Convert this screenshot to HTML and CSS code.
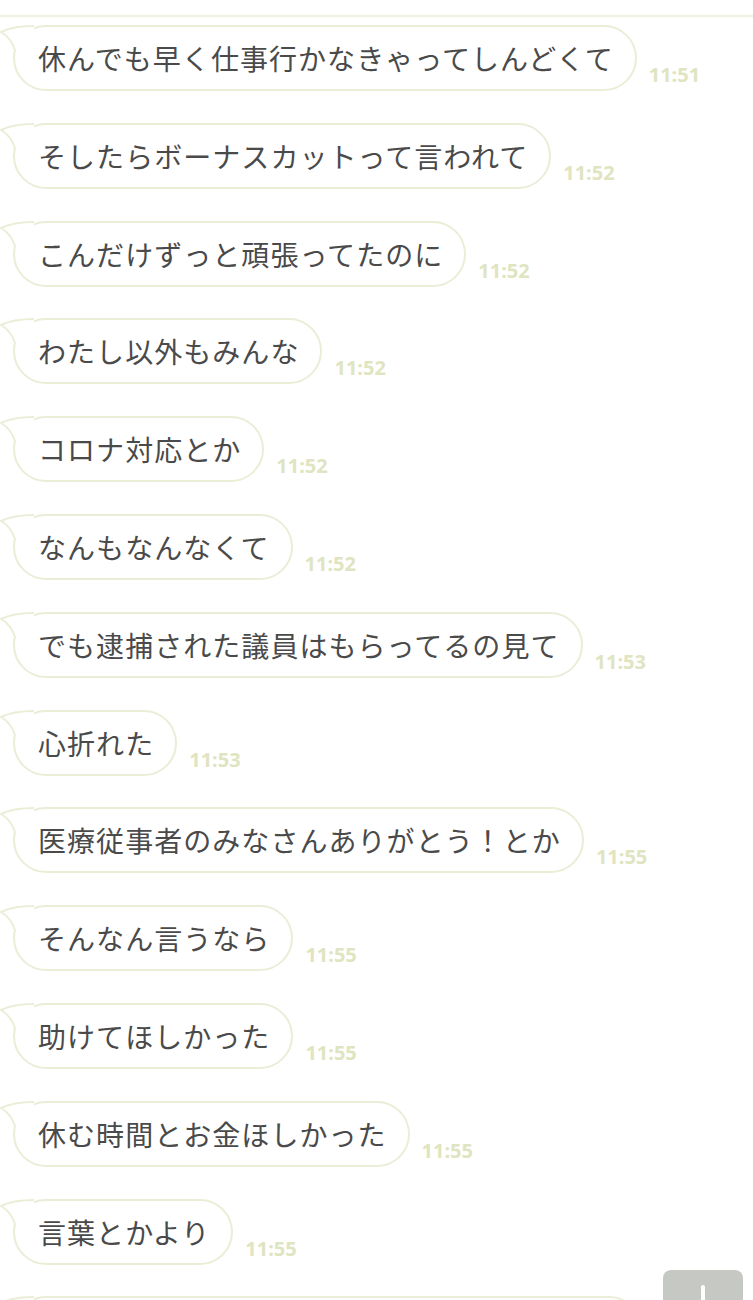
FILE: index.html
```html
<!DOCTYPE html>
<html lang="ja">
<head>
<meta charset="utf-8">
<link rel="stylesheet" href="styles.css">
</head>
<body>
<div class="chat">
  <div class="row"><div class="bubble"><svg class="tail" width="34" height="30" viewBox="0 0 34 30"><path d="M34 3 C22 3 9 5 1 9 C8 13 12 18 15 27 L34 27 Z" fill="#fff"/><path d="M34 3 C22 3 9 5 1 9 C8 13 12 18 15 27" fill="none" stroke="#ebedd7" stroke-width="2"/></svg>休んでも早く仕事行かなきゃってしんどくて</div><span class="time">11:51</span></div>
  <div class="row"><div class="bubble"><svg class="tail" width="34" height="30" viewBox="0 0 34 30"><path d="M34 3 C22 3 9 5 1 9 C8 13 12 18 15 27 L34 27 Z" fill="#fff"/><path d="M34 3 C22 3 9 5 1 9 C8 13 12 18 15 27" fill="none" stroke="#ebedd7" stroke-width="2"/></svg>そしたらボーナスカットって言われて</div><span class="time">11:52</span></div>
  <div class="row"><div class="bubble"><svg class="tail" width="34" height="30" viewBox="0 0 34 30"><path d="M34 3 C22 3 9 5 1 9 C8 13 12 18 15 27 L34 27 Z" fill="#fff"/><path d="M34 3 C22 3 9 5 1 9 C8 13 12 18 15 27" fill="none" stroke="#ebedd7" stroke-width="2"/></svg>こんだけずっと頑張ってたのに</div><span class="time">11:52</span></div>
  <div class="row"><div class="bubble"><svg class="tail" width="34" height="30" viewBox="0 0 34 30"><path d="M34 3 C22 3 9 5 1 9 C8 13 12 18 15 27 L34 27 Z" fill="#fff"/><path d="M34 3 C22 3 9 5 1 9 C8 13 12 18 15 27" fill="none" stroke="#ebedd7" stroke-width="2"/></svg>わたし以外もみんな</div><span class="time">11:52</span></div>
  <div class="row"><div class="bubble"><svg class="tail" width="34" height="30" viewBox="0 0 34 30"><path d="M34 3 C22 3 9 5 1 9 C8 13 12 18 15 27 L34 27 Z" fill="#fff"/><path d="M34 3 C22 3 9 5 1 9 C8 13 12 18 15 27" fill="none" stroke="#ebedd7" stroke-width="2"/></svg>コロナ対応とか</div><span class="time">11:52</span></div>
  <div class="row"><div class="bubble"><svg class="tail" width="34" height="30" viewBox="0 0 34 30"><path d="M34 3 C22 3 9 5 1 9 C8 13 12 18 15 27 L34 27 Z" fill="#fff"/><path d="M34 3 C22 3 9 5 1 9 C8 13 12 18 15 27" fill="none" stroke="#ebedd7" stroke-width="2"/></svg>なんもなんなくて</div><span class="time">11:52</span></div>
  <div class="row"><div class="bubble"><svg class="tail" width="34" height="30" viewBox="0 0 34 30"><path d="M34 3 C22 3 9 5 1 9 C8 13 12 18 15 27 L34 27 Z" fill="#fff"/><path d="M34 3 C22 3 9 5 1 9 C8 13 12 18 15 27" fill="none" stroke="#ebedd7" stroke-width="2"/></svg>でも逮捕された議員はもらってるの見て</div><span class="time">11:53</span></div>
  <div class="row"><div class="bubble"><svg class="tail" width="34" height="30" viewBox="0 0 34 30"><path d="M34 3 C22 3 9 5 1 9 C8 13 12 18 15 27 L34 27 Z" fill="#fff"/><path d="M34 3 C22 3 9 5 1 9 C8 13 12 18 15 27" fill="none" stroke="#ebedd7" stroke-width="2"/></svg>心折れた</div><span class="time">11:53</span></div>
  <div class="row"><div class="bubble"><svg class="tail" width="34" height="30" viewBox="0 0 34 30"><path d="M34 3 C22 3 9 5 1 9 C8 13 12 18 15 27 L34 27 Z" fill="#fff"/><path d="M34 3 C22 3 9 5 1 9 C8 13 12 18 15 27" fill="none" stroke="#ebedd7" stroke-width="2"/></svg>医療従事者のみなさんありがとう！とか</div><span class="time">11:55</span></div>
  <div class="row"><div class="bubble"><svg class="tail" width="34" height="30" viewBox="0 0 34 30"><path d="M34 3 C22 3 9 5 1 9 C8 13 12 18 15 27 L34 27 Z" fill="#fff"/><path d="M34 3 C22 3 9 5 1 9 C8 13 12 18 15 27" fill="none" stroke="#ebedd7" stroke-width="2"/></svg>そんなん言うなら</div><span class="time">11:55</span></div>
  <div class="row"><div class="bubble"><svg class="tail" width="34" height="30" viewBox="0 0 34 30"><path d="M34 3 C22 3 9 5 1 9 C8 13 12 18 15 27 L34 27 Z" fill="#fff"/><path d="M34 3 C22 3 9 5 1 9 C8 13 12 18 15 27" fill="none" stroke="#ebedd7" stroke-width="2"/></svg>助けてほしかった</div><span class="time">11:55</span></div>
  <div class="row"><div class="bubble"><svg class="tail" width="34" height="30" viewBox="0 0 34 30"><path d="M34 3 C22 3 9 5 1 9 C8 13 12 18 15 27 L34 27 Z" fill="#fff"/><path d="M34 3 C22 3 9 5 1 9 C8 13 12 18 15 27" fill="none" stroke="#ebedd7" stroke-width="2"/></svg>休む時間とお金ほしかった</div><span class="time">11:55</span></div>
  <div class="row"><div class="bubble"><svg class="tail" width="34" height="30" viewBox="0 0 34 30"><path d="M34 3 C22 3 9 5 1 9 C8 13 12 18 15 27 L34 27 Z" fill="#fff"/><path d="M34 3 C22 3 9 5 1 9 C8 13 12 18 15 27" fill="none" stroke="#ebedd7" stroke-width="2"/></svg>言葉とかより</div><span class="time">11:55</span></div>
  <div class="row"><div class="bubble"><svg class="tail" width="34" height="30" viewBox="0 0 34 30"><path d="M34 3 C22 3 9 5 1 9 C8 13 12 18 15 27 L34 27 Z" fill="#fff"/><path d="M34 3 C22 3 9 5 1 9 C8 13 12 18 15 27" fill="none" stroke="#ebedd7" stroke-width="2"/></svg>&#12288;&#12288;&#12288;&#12288;&#12288;&#12288;&#12288;&#12288;&#12288;&#12288;&#12288;&#12288;&#12288;&#12288;&#12288;&#12288;&#12288;&#12288;&#12288;&#12288;</div></div>
</div>
<div class="scroll-btn"><svg width="20" height="20" viewBox="0 0 20 20"><path d="M10 3 L10 20" stroke="#fff" stroke-width="4" stroke-linecap="round"/></svg></div>
</body>
</html>
```
FILE: styles.css
```css
html, body {
  margin: 0;
  padding: 0;
  background: #ffffff;
  overflow: hidden;
  height: 1300px;
}
body {
  font-family: "Noto Sans CJK JP", "Noto Sans", sans-serif;
}
.chat {
  border-top: 2px solid #eef0e0;
  margin-top: 15px;
  padding-top: 8px;
  display: flex;
  flex-direction: column;
  gap: 31.8px;
}
.row {
  display: flex;
  align-items: flex-end;
  gap: 12px;
  padding-left: 13px;
}
.bubble {
  position: relative;
  box-sizing: border-box;
  height: 66px;
  border: 2px solid #ebedd7;
  border-radius: 33px;
  padding: 0 21px 0 23px;
  display: flex;
  align-items: center;
  font-size: 28px;
  color: #4a4a4a;
  letter-spacing: 1.05px;
  white-space: nowrap;
  background: #fff;
}
.tail {
  position: absolute;
  left: -15px;
  top: -4px;
}
.time {
  font-family: "Noto Sans", sans-serif;
  font-size: 20px;
  font-weight: 700;
  color: #dfe4c1;
  margin-bottom: 3px;
}
.scroll-btn {
  position: absolute;
  left: 663px;
  top: 1270px;
  width: 80px;
  height: 40px;
  background: #c6c8c3;
  border-radius: 8px 8px 0 0;
  display: flex;
  justify-content: center;
  padding-top: 14px;
  box-sizing: border-box;
}
```
